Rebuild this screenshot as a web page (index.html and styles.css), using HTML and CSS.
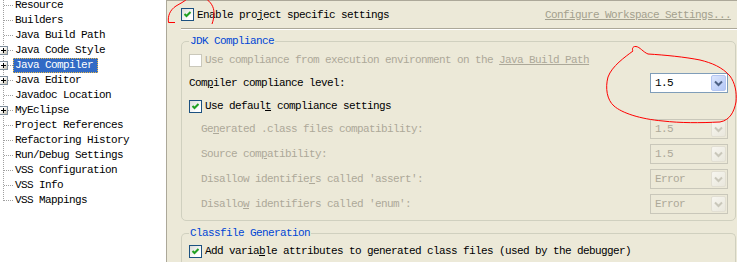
FILE: index.html
```html
<!DOCTYPE html>
<html>
<head>
<meta charset="utf-8">
<link rel="stylesheet" href="styles.css">
</head>
<body>
<div class="window">
  <div class="tree">
    <div class="tree-list">
      <div class="node"><span class="twig"></span><span class="label">Resource</span></div>
      <div class="node"><span class="twig"></span><span class="label">Builders</span></div>
      <div class="node"><span class="twig"></span><span class="label">Java Build Path</span></div>
      <div class="node"><span class="twig"><span class="plus"></span></span><span class="label">Java Code Style</span></div>
      <div class="node"><span class="twig"><span class="plus"></span></span><span class="label sel">Java Compiler</span></div>
      <div class="node"><span class="twig"><span class="plus"></span></span><span class="label">Java Editor</span></div>
      <div class="node"><span class="twig"></span><span class="label">Javadoc Location</span></div>
      <div class="node"><span class="twig"><span class="plus"></span></span><span class="label">MyEclipse</span></div>
      <div class="node"><span class="twig"></span><span class="label">Project References</span></div>
      <div class="node"><span class="twig"></span><span class="label">Refactoring History</span></div>
      <div class="node"><span class="twig"></span><span class="label">Run/Debug Settings</span></div>
      <div class="node"><span class="twig"></span><span class="label">VSS Configuration</span></div>
      <div class="node"><span class="twig"></span><span class="label">VSS Info</span></div>
      <div class="node"><span class="twig"></span><span class="label">VSS Mappings</span></div>
    </div>
  </div>

  <div class="main">
    <div class="header">
      <div class="check-row">
        <span class="cb checked"><svg width="11" height="11" viewBox="0 0 11 11"><polyline points="2.5,5 4.5,7 8.5,3" fill="none" stroke="#21A121" stroke-width="2"/></svg></span>
        <span class="txt">Enable pro<u>j</u>ect specific settings</span>
      </div>
      <span class="link">Configure Workspace Settings...</span>
    </div>
    <div class="sep"></div>

    <div class="group g1">
      <div class="group-title">JDK Compliance</div>
      <div class="frow r1">
        <span class="cb disabled"></span>
        <span class="txt dis">Use compliance from execution environment on the <u>Java Build Path</u></span>
      </div>
      <div class="frow r2">
        <span class="txt">Com<u>p</u>iler compliance level:</span>
        <span class="combo">
          <span class="val">1.5</span>
          <span class="btn"><svg width="13" height="14" viewBox="0 0 13 14"><polyline points="3,5.5 6.5,9 10,5.5" fill="none" stroke="#4D6185" stroke-width="2"/></svg></span>
        </span>
      </div>
      <div class="frow r3">
        <span class="cb checked"><svg width="11" height="11" viewBox="0 0 11 11"><polyline points="2.5,5 4.5,7 8.5,3" fill="none" stroke="#21A121" stroke-width="2"/></svg></span>
        <span class="txt">Use defaul<u>t</u> compliance settings</span>
      </div>
      <div class="frow sub r4">
        <span class="txt dis">Ge<u>n</u>erated .class files compatibility:</span>
        <span class="combo off"><span class="val">1.5</span><span class="btn"><svg width="13" height="14" viewBox="0 0 13 14"><polyline points="3,5.5 6.5,9 10,5.5" fill="none" stroke="#C9C7BA" stroke-width="2"/></svg></span></span>
      </div>
      <div class="frow sub">
        <span class="txt dis">Source com<u>p</u>atibility:</span>
        <span class="combo off"><span class="val">1.5</span><span class="btn"><svg width="13" height="14" viewBox="0 0 13 14"><polyline points="3,5.5 6.5,9 10,5.5" fill="none" stroke="#C9C7BA" stroke-width="2"/></svg></span></span>
      </div>
      <div class="frow sub">
        <span class="txt dis">Disallow identifie<u>r</u>s called 'assert':</span>
        <span class="combo off"><span class="val">Error</span><span class="btn"><svg width="13" height="14" viewBox="0 0 13 14"><polyline points="3,5.5 6.5,9 10,5.5" fill="none" stroke="#C9C7BA" stroke-width="2"/></svg></span></span>
      </div>
      <div class="frow sub">
        <span class="txt dis">Disallo<u>w</u> identifiers called 'enum':</span>
        <span class="combo off"><span class="val">Error</span><span class="btn"><svg width="13" height="14" viewBox="0 0 13 14"><polyline points="3,5.5 6.5,9 10,5.5" fill="none" stroke="#C9C7BA" stroke-width="2"/></svg></span></span>
      </div>
    </div>

    <div class="group g2">
      <div class="group-title">Classfile Generation</div>
      <div class="frow r1b">
        <span class="cb checked"><svg width="11" height="11" viewBox="0 0 11 11"><polyline points="2.5,5 4.5,7 8.5,3" fill="none" stroke="#21A121" stroke-width="2"/></svg></span>
        <span class="txt">Add varia<u>b</u>le attributes to generated class files (used by the debugger)</span>
      </div>
    </div>
  </div>

  <svg class="annot" width="737" height="262" viewBox="0 0 737 262">
    <path d="M175,22.5 L168.5,22.5 C167.5,16 170,10 176,6 C180,3.5 184,2 188,-2" fill="none" stroke="#F00" stroke-width="1"/>
    <path d="M205,-2 C211,2 214,7 214,13 C214,18 213,21 212,24" fill="none" stroke="#F00" stroke-width="1"/>
    <path d="M648,54 C643,52 640,47 636,46.5 C632,46 632,50 633,51 C625,57 612,66 608,77 C605,88 607,100 614,106 C622,113 640,119 663,121 C680,123 700,123 720,122 C730,120 734,112 736,102 C737,92 735,83 730,76 C722,67 712,63 700,60 C685,57 665,55 648,54" fill="none" stroke="#F00" stroke-width="1"/>
  </svg>
</div>
</body>
</html>
```

FILE: styles.css
```css
* {
  box-sizing: border-box;
}

body {
  margin: 0;
  width: 737px;
  height: 262px;
  overflow: hidden;
  font-family: "Liberation Mono", "DejaVu Sans Mono", monospace;
  font-size: 11px;
  letter-spacing: -0.6px;
  color: #000;
}

.window {
  position: relative;
  display: flex;
  height: 262px;
}

/* ---------- tree ---------- */
.tree {
  width: 167px;
  flex: none;
  border-right: 1px solid #ACA899;
  background:
    repeating-linear-gradient(to bottom, #A0A0A0 0 1px, transparent 1px 2px) 3px 0 / 1px 201px no-repeat,
    #fff;
  overflow: hidden;
}

.tree-list {
  margin-top: -2px;
}

.node {
  display: flex;
  height: 15px;
  line-height: 15px;
  background: repeating-linear-gradient(to right, #A0A0A0 0 1px, transparent 1px 2px) 4px 7px / 9px 1px no-repeat;
}

.twig {
  width: 13px;
  flex: none;
}

.plus {
  display: block;
  width: 9px;
  height: 9px;
  margin: 3px 0 0 -1px;
  border: 1px solid #7F8E9C;
  background:
    linear-gradient(#000, #000) center / 5px 1px no-repeat,
    linear-gradient(#000, #000) center / 1px 5px no-repeat,
    linear-gradient(135deg, #fff 35%, #C4C0B0);
}

.label {
  padding: 0 5px 0 2px;
  white-space: nowrap;
}

.label.sel {
  background: #316AC5;
  color: #fff;
  outline: 1px dotted #E8B84A;
  outline-offset: -1px;
}

/* ---------- main ---------- */
.main {
  flex: 1;
  min-width: 0;
  background: #ECE9D8;
  border-top: 1px solid #ACA899;
}

.header {
  height: 27px;
  display: flex;
  align-items: center;
  justify-content: space-between;
  padding: 0 6px 0 14px;
}

.check-row {
  display: flex;
  align-items: center;
  gap: 3px;
}

.txt {
  white-space: nowrap;
}

.txt u {
  text-decoration: underline;
}

.link {
  color: #A3A08D;
  text-decoration: underline;
  white-space: nowrap;
}

.sep {
  margin-left: 14px;
  border-top: 1px solid #ACA899;
  border-bottom: 1px solid #fff;
}

/* checkboxes */
.cb {
  width: 13px;
  height: 13px;
  flex: none;
  display: flex;
  align-items: center;
  justify-content: center;
  border: 1px solid #1C5180;
  background: linear-gradient(135deg, #DCDCD7, #fff 75%);
}

.cb.disabled {
  border-color: #CAC8BB;
  background: #fff;
}

/* groups */
.group {
  margin: 11px 1px 0 14px;
  border: 1px solid #D0D0BF;
  border-radius: 5px;
  padding: 0 7px 6px 7px;
}

.g2 {
  margin-top: 12px;
  border-bottom: none;
  border-bottom-left-radius: 0;
  border-bottom-right-radius: 0;
}

.group-title {
  width: fit-content;
  margin-top: -7px;
  height: 12px;
  line-height: 12px;
  padding: 0 1px;
  background: #ECE9D8;
  color: #0046D5;
  white-space: nowrap;
}

.frow {
  display: flex;
  align-items: center;
  height: 20px;
  margin-top: 3px;
  gap: 3px;
}

.r2,
.sub {
  justify-content: space-between;
}

.sub {
  margin-top: 5px;
  padding-left: 12px;
}

.r4 {
  margin-top: 3px;
}

.r1b {
  margin-top: 2px;
}

.dis {
  color: #ACA899;
}

/* combos */
.combo {
  width: 78px;
  height: 20px;
  flex: none;
  display: flex;
  align-items: center;
  justify-content: space-between;
  padding: 1px;
  border: 1px solid #7F9DB9;
  background: #fff;
}

.val {
  padding-left: 3px;
}

.btn {
  width: 15px;
  height: 16px;
  display: flex;
  align-items: center;
  justify-content: center;
  border: 1px solid #B4C6F2;
  border-radius: 2px;
  background: linear-gradient(135deg, #DCE6FD, #B3C7F6);
}

.combo.off {
  border-color: #C9C7BA;
  background: #ECE9D8;
  color: #ACA899;
}

.combo.off .btn {
  border-color: #E2DFD3;
  background: linear-gradient(135deg, #F7F6F0, #E9E7DC);
}

/* annotation overlay */
.annot {
  position: absolute;
  left: 0;
  top: 0;
  pointer-events: none;
}
```
